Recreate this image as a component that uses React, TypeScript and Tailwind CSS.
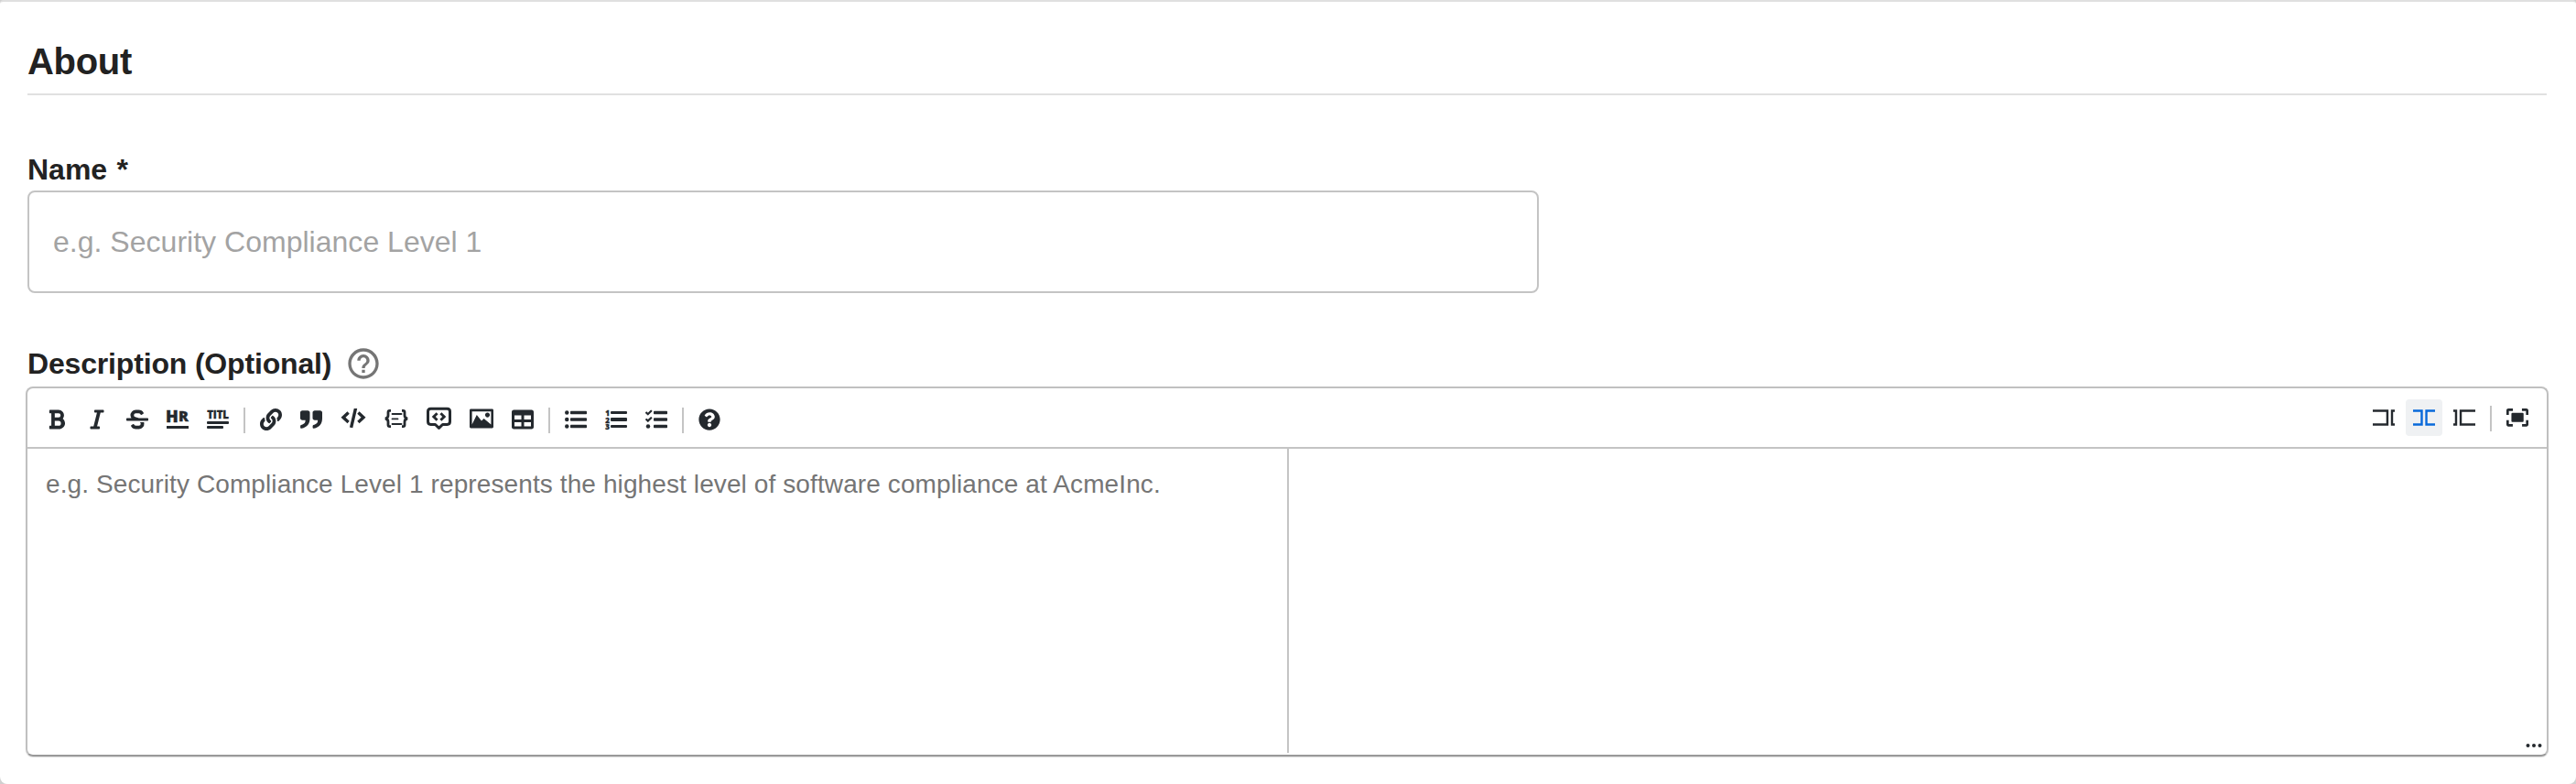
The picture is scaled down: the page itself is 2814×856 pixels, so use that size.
import React from "react";
import { FaBold, FaItalic, FaStrikethrough, FaLink, FaTable, FaQuestionCircle } from "react-icons/fa";
import { MdHelpOutline } from "react-icons/md";

function ToolButton({ children, active }: { children: React.ReactNode; active?: boolean }) {
  return (
    <button
      type="button"
      className={
        active
          ? "mx-[2px] flex h-10 items-center justify-center rounded-[4px] bg-[#eff1f3] px-2 text-[#0969da]"
          : "mx-[2px] flex h-10 items-center justify-center rounded-[4px] px-2 text-[#24292e]"
      }
    >
      {children}
    </button>
  );
}

function Separator() {
  return <span className="mx-[6px] mt-[2px] h-7 w-[2px] bg-[#c4c4c4]" />;
}

function HrIcon() {
  return (
    <span className="flex h-6 w-6 flex-col font-['Open_Sans',sans-serif] font-extrabold [-webkit-text-stroke:0.4px]">
      <span className="flex h-[18px] items-end whitespace-nowrap">
        <span className="-ml-[1px] w-[14px] text-[18px] leading-[20px]">H</span>
        <span className="text-[16px] leading-[20px]">R</span>
      </span>
      <span className="mt-[1px] h-[3px] w-6 bg-current" />
    </span>
  );
}

function TitleIcon() {
  return (
    <span className="flex h-6 w-6 flex-col font-['Open_Sans',sans-serif] font-extrabold [-webkit-text-stroke:0.3px]">
      <span className="flex h-[12px] items-end justify-center text-[11.5px] leading-[11px] tracking-[-0.2px] whitespace-nowrap">TITL</span>
      <span className="mt-[2px] h-[3px] w-6 rounded-[1px] bg-current" />
      <span className="mt-[2px] h-[3px] w-[18px] rounded-[1px] bg-current" />
    </span>
  );
}

function QuoteIcon() {
  return (
    <svg width="24" height="24" viewBox="0 0 520 520" fill="currentColor">
      <path d="M520,95.75 L520,225.75 C520,364.9 457.1,437 325,472.4 C309.6,476.6 294.4,464.9 294.4,448.9 L294.4,414.5 C294.4,404.2 300.7,395 310.3,391.6 C377.4,367.3 414.4,349.7 414.4,274.5 L341.25,274.5 C314.3,274.5 292.5,252.7 292.5,225.75 L292.5,95.75 C292.5,68.8 314.3,47 341.25,47 L471.25,47 C498.2,47 520,68.8 520,95.75 Z M178.75,47 L48.75,47 C21.8,47 0,68.8 0,95.75 L0,225.75 C0,252.7 21.8,274.5 48.75,274.5 L121.9,274.5 C121.9,349.7 84.9,367.3 17.8,391.6 C8.2,395 1.9,404.2 1.9,414.5 L1.9,448.9 C1.9,464.9 17.1,476.6 32.5,472.4 C164.6,437 227.5,364.9 227.5,225.75 L227.5,95.75 C227.5,68.8 205.7,47 178.75,47 Z" />
    </svg>
  );
}

function CodeIcon() {
  return (
    <svg width="28" height="24" viewBox="0 0 28 24" fill="none" stroke="currentColor" strokeWidth="3.4">
      <path d="M8.6 4.6 3 9.8l5.6 5.200M19.4 4.600l5.600 5.200-5.600 5.200M16.600-.6l-5 21.400" />
    </svg>
  );
}

function CodeBlockIcon() {
  return (
    <svg width="26" height="24" viewBox="0 0 26 24" fill="none" stroke="currentColor">
      <path strokeWidth="2.8" d="M7 2.400H5.600Q4 2.400 4 4v3.600Q4 10.600.8 11 4 11.400 4 14.400V18q0 1.600 1.600 1.600H7M19 2.400h1.400Q22 2.400 22 4v3.600q0 3 3.200 3.400-3.200.4-3.200 3.400V18q0 1.600-1.600 1.600H19" />
      <path strokeWidth="1.8" strokeLinecap="round" d="M8.500 6h10M8.500 11.400h6M8.500 17h10" />
    </svg>
  );
}

function CommentIcon() {
  return (
    <svg width="27" height="28" viewBox="0 0 27 28" fill="none" stroke="currentColor">
      <path strokeWidth="3" strokeLinejoin="round" d="M4.500 2.300h18q3 0 3 3v11q0 3-3 3.200h-5l-4 3.800-4-3.800h-5q-3-.2-3-3.200v-11q0-3 3-3z" />
      <path strokeWidth="2.900" d="M11.600 7.300 7.800 11l3.800 3.700M15.400 7.300l3.800 3.700-3.800 3.700" />
    </svg>
  );
}

function ImageIcon() {
  return (
    <svg className="-mt-[2px]" width="26" height="26" viewBox="0 0 20 20" fill="currentColor">
      <path d="M15 9c1.1 0 2-.9 2-2s-.9-2-2-2-2 .9-2 2 .9 2 2 2zm4-7H1c-.55 0-1 .45-1 1v14c0 .55.45 1 1 1h18c.55 0 1-.45 1-1V3c0-.55-.45-1-1-1zm-1 13l-6-5-2 2-4-5-4 8V4h16v11z" />
    </svg>
  );
}

function BulletListIcon() {
  return (
    <svg width="24" height="24" viewBox="0 0 512 512" fill="currentColor">
      <circle cx="48" cy="96" r="48" />
      <circle cx="48" cy="256" r="48" />
      <circle cx="48" cy="416" r="48" />
      <rect x="128" y="60" width="384" height="72" rx="16" />
      <rect x="128" y="220" width="384" height="72" rx="16" />
      <rect x="128" y="380" width="384" height="72" rx="16" />
    </svg>
  );
}

function NumberListIcon() {
  return (
    <span className="flex h-6 w-6 flex-col justify-between py-[1px] font-['Open_Sans',sans-serif] text-[8px] leading-[7px] font-extrabold [-webkit-text-stroke:0.3px]">
      {["1", "2", "3"].map((n) => (
        <span key={n} className="flex h-[7px] items-center gap-[1px]">
          <span className="w-[5px]">{n}</span>
          <span className="h-[3.4px] grow rounded-[1px] bg-current" />
        </span>
      ))}
    </span>
  );
}

function TaskListIcon() {
  return (
    <svg width="24" height="24" viewBox="0 0 512 512" fill="currentColor">
      <path d="M139.600 35.500a12 12 0 0 0-17 0L58.900 98.800l-22.700-22.100a12 12 0 0 0-17 0L3.500 92.400a12 12 0 0 0 0 17l47.600 47.400a12.800 12.800 0 0 0 17.600 0l15.600-15.600L156.500 69a12.100 12.100 0 0 0 .1-17zM139.600 194.700a12 12 0 0 0-17 0L58.900 258.400l-22.700-22.100a12 12 0 0 0-17 0L3.500 252a12 12 0 0 0 0 17l47.600 47.500a12.800 12.800 0 0 0 17.600 0l15.700-15.700 72.200-72.200a12 12 0 0 0 .1-16.900z" />
      <circle cx="64" cy="416" r="48" />
      <rect x="192" y="60" width="320" height="72" rx="16" />
      <rect x="192" y="220" width="320" height="72" rx="16" />
      <rect x="192" y="380" width="320" height="72" rx="16" />
    </svg>
  );
}

function PaneIcon({ left, right }: { left: string; right: string }) {
  return (
    <svg width="24" height="24" viewBox="0 0 520 520" fill="currentColor">
      <polygon points={left} />
      <polygon points={right} />
    </svg>
  );
}

function FullscreenIcon() {
  return (
    <svg width="24" height="24" viewBox="0 0 520 520" fill="currentColor">
      <rect x="118" y="148" width="288" height="217" rx="23" />
      <path d="M465.400,413.400H370V471.200H474C500,471.200 520.300,451 520.300,425V321H462.500V413.400ZM471,43H367V100.800H462.400V196.100H520.100V89.200C517.300,63.200 497,43 471,43ZM57.800,100.800H153.100V43H46.200C20.200,43 0,63.200 0,89.200V193.200H57.800ZM57.800,321H0V425C0,451 20.200,471.200 46.200,471.200H150.300V413.400H57.800Z" />
    </svg>
  );
}

export default function App() {
  return (
    <div className="h-[856px] w-full bg-[#d0d0d0] font-['Liberation_Sans',sans-serif] text-[#222222]">
      <div className="flex h-full flex-col rounded-t-[4px] rounded-b-[8px] border-t-2 border-[#e0e0e0] bg-white pr-[32px] pl-[30px]">
        <h2 className="flex h-[102px] items-center border-b-2 border-[#e0e0e0] pt-[32px] pb-[2px] text-[40px] leading-[66px] font-bold tracking-[-0.3px]">About</h2>
        <label className="mt-[59px] mb-[1px] h-[44px] text-[32px] leading-[44px] font-bold [word-spacing:1.5px]">Name *</label>
        <input
          className="h-[112px] w-[1651px] rounded-[8px] border-2 border-[#c4c4c4] px-[26px] text-[32px] tracking-[0.02px] outline-none placeholder:text-[#a3a3a3]"
          placeholder="e.g. Security Compliance Level 1"
        />
        <div className="mt-[52px] flex h-[50px] items-center">
          <span className="w-[347px] text-[32px] leading-[50px] font-bold tracking-[-0.17px] whitespace-nowrap">Description (Optional)</span>
          <MdHelpOutline size={40} className="text-[#757575]" />
        </div>
        <section className="-mx-[2px] mr-0 flex h-[404px] w-[2756px] flex-col rounded-[8px] border-2 border-[#c0c0c0] border-b-[#999999] shadow-[0_1px_1px_#dddddd]">
          <div className="flex h-[66px] shrink-0 items-center justify-between border-b-2 border-[#c4c4c4] pr-[10px] pl-[10px]">
            <div className="flex items-center pt-[4px]">
              <ToolButton><FaBold size={24} /></ToolButton>
              <ToolButton><FaItalic size={24} /></ToolButton>
              <ToolButton><FaStrikethrough size={24} /></ToolButton>
              <ToolButton><HrIcon /></ToolButton>
              <ToolButton><TitleIcon /></ToolButton>
              <Separator />
              <ToolButton><FaLink size={24} /></ToolButton>
              <ToolButton><QuoteIcon /></ToolButton>
              <ToolButton><CodeIcon /></ToolButton>
              <ToolButton><CodeBlockIcon /></ToolButton>
              <ToolButton><CommentIcon /></ToolButton>
              <ToolButton><ImageIcon /></ToolButton>
              <ToolButton><FaTable size={24} /></ToolButton>
              <Separator />
              <ToolButton><BulletListIcon /></ToolButton>
              <ToolButton><NumberListIcon /></ToolButton>
              <ToolButton><TaskListIcon /></ToolButton>
              <Separator />
              <ToolButton><FaQuestionCircle size={24} /></ToolButton>
            </div>
            <div className="flex items-center">
              <ToolButton>
                <PaneIcon left="0 71 0 122 319 122 319 397 0 397 0 450 372 449 372 71" right="429 71 520 71 520 122 481 123 481 396 520 396 520 450 429 449" />
              </ToolButton>
              <ToolButton active>
                <PaneIcon left="0 71 0 122 179 122 179 397 0 397 0 450 232 449 232 71" right="289 71 520 71 520 122 341 123 341 396 520 396 520 450 289 449" />
              </ToolButton>
              <ToolButton>
                <PaneIcon left="0 71 0 122 38 123 38 398 0 397 0 450 91 450 91 72" right="148 72 520 71 520 122 200 124 200 397 520 396 520 450 148 450" />
              </ToolButton>
              <Separator />
              <ToolButton><FullscreenIcon /></ToolButton>
            </div>
          </div>
          <div className="flex grow">
            <textarea
              className="h-full w-[1376px] resize-none px-5 pt-[21px] text-[28px] leading-[36px] tracking-[0.105px] outline-none placeholder:text-[#757575]"
              placeholder="e.g. Security Compliance Level 1 represents the highest level of software compliance at AcmeInc."
            />
            <div className="mb-[2px] flex grow items-end justify-end border-l-2 border-[#c4c4c4] pr-[5px] pb-[5px]">
              <svg width="18" height="6" viewBox="0 0 18 6" fill="#24292e">
                <circle cx="2.500" cy="3" r="2" />
                <circle cx="9" cy="3" r="2" />
                <circle cx="15.500" cy="3" r="2" />
              </svg>
            </div>
          </div>
        </section>
      </div>
    </div>
  );
}
